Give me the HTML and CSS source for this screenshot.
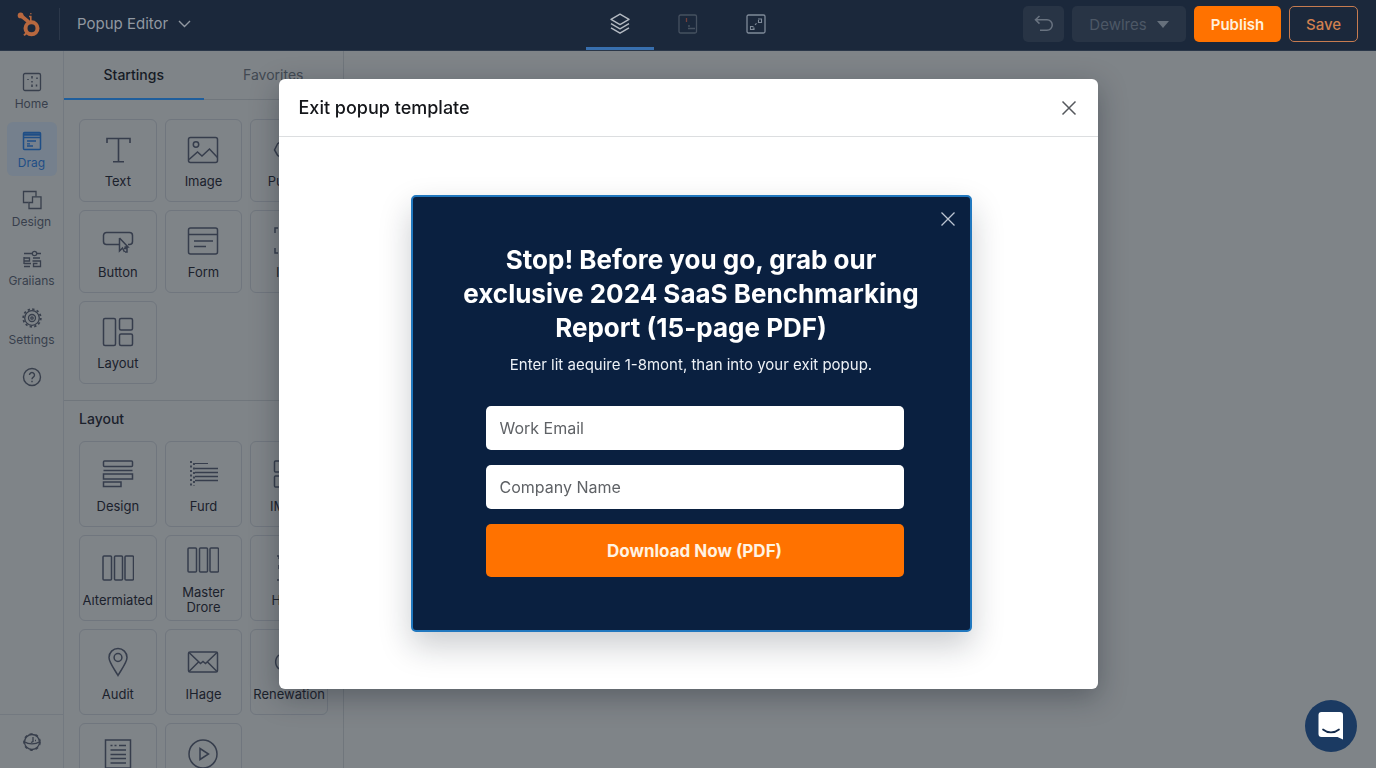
FILE: index.html
```html
<!DOCTYPE html>
<html lang="en">
<head>
<meta charset="utf-8">
<meta name="viewport" content="width=device-width, initial-scale=1">
<title>Popup Editor</title>
<link rel="stylesheet" href="styles.css">
</head>
<body>
<div class="app">
  <header class="topbar">
    <div class="brand">
      <a class="logo" href="#" aria-label="Dashboard">
        <svg width="24" height="26" viewBox="0 0 24 26" fill="none" stroke="currentColor">
          <circle cx="14.5" cy="17.3" r="6" stroke-width="4"/>
          <path d="M3.8 4.5 11 10.3" stroke-width="3.6" stroke-linecap="round"/>
          <circle cx="3.6" cy="4.4" r="2.9" fill="currentColor" stroke="none"/>
          <path d="M13.8 10.5V5M13.8 2.2v1M12 5.5h2.5" stroke-width="1.6"/>
          <path d="M10 21.5 7 24.4" stroke-width="2"/>
        </svg>
      </a>
      <button class="switcher" type="button">Popup Editor
        <svg width="13" height="8" viewBox="0 0 13 8" fill="none" stroke="currentColor" stroke-width="1.4"><path d="M1 1l5.5 5.5L12 1"/></svg>
      </button>
    </div>
    <nav class="views" aria-label="Views">
      <button class="view view-active" type="button" aria-label="Layers">
        <svg width="22" height="22" viewBox="0 0 22 22" fill="none" stroke="currentColor" stroke-width="1.4" stroke-linejoin="round"><path d="M11 1.2 20 6.4 11 11.6 2 6.4z"/><path d="M2 10.6l9 5.2 9-5.2M2 14.8l9 5.4 9-5.4"/></svg>
      </button>
      <button class="view view-muted" type="button" aria-label="Page">
        <svg width="20" height="20" viewBox="0 0 20 20" fill="none" stroke="currentColor" stroke-width="1.3"><rect x="1" y="1" width="17.5" height="18" rx="1.5"/><path class="accent" d="M8.500 4v4"/><path d="M10 12h2M10 14.500h7"/></svg>
      </button>
      <button class="view" type="button" aria-label="Preview">
        <svg width="20" height="20" viewBox="0 0 20 20" fill="none" stroke="currentColor" stroke-width="1.3"><rect x="1" y="1" width="18" height="18" rx="1.500"/><path d="M12 5h3.500v3.500h-3V6M7.500 12.500H4.500v3h3.500v-1.500H6.500M9 10.800l1.500-1.500" stroke-width="1.100"/></svg>
      </button>
    </nav>
    <div class="actions">
      <button class="btn btn-icon" type="button" aria-label="Undo">
        <svg width="20" height="18" viewBox="0 0 20 18" fill="none" stroke="currentColor" stroke-width="1.500"><path d="M5.500 1 1.500 4.800l4 3.800M1.500 4.800H13a5 5 0 0 1 0 10.500H6"/></svg>
      </button>
      <button class="btn btn-menu" type="button">Dewlres
        <svg width="12" height="7" viewBox="0 0 12 7" fill="currentColor"><path d="M0 0h12L6 7z"/></svg>
      </button>
      <button class="btn btn-primary" type="button">Publish</button>
      <button class="btn btn-outline" type="button">Save</button>
    </div>
  </header>

  <div class="workspace">
    <nav class="rail" aria-label="Sections">
      <div class="rail-items">
        <a class="rail-item" href="#"><svg width="20" height="20" viewBox="0 0 20 20" fill="none" stroke="currentColor" stroke-width="1.300"><rect x="1.500" y="1.500" width="17" height="17" rx="1.500"/><path d="M10 4v2.500M15 5.500v1.500M10 9v1.500M10 12.500V15M14.500 12.500v2M6 7v1" stroke-width="1.500"/></svg>Home</a>
        <a class="rail-item rail-active" href="#"><svg width="20" height="20" viewBox="0 0 20 20" fill="none" stroke="currentColor" stroke-width="1.500"><rect x="1.500" y="1.500" width="17" height="17" rx="1"/><path d="M2 3.500h16" stroke-width="2.500"/><path d="M2 6.500h16"/><path d="M5 10h9M5 12.800h3M5 15h6" stroke-width="1.300"/></svg>Drag</a>
        <a class="rail-item" href="#"><svg width="20" height="20" viewBox="0 0 20 20" fill="none" stroke="currentColor" stroke-width="1.300"><path d="M6.500 12.500h-5v-11H14v5"/><path d="M10.500 8.500V6.800H19v11.700H7v-6h3.500v-4"/></svg>Design</a>
        <a class="rail-item" href="#"><svg width="20" height="20" viewBox="0 0 20 20" fill="none" stroke="currentColor" stroke-width="1.300"><path d="M2 4.500h8M15 4.500h4"/><circle cx="12.500" cy="4.500" r="2.200"/><path d="M2 8v7M2 9h5.500v3H2M2 14.500h7M2 17.500h6M11 9h7M10.500 12h8v5.500h-7v-3h4"/></svg>Graiians</a>
        <a class="rail-item" href="#"><svg width="20" height="20" viewBox="0 0 20 20" fill="none" stroke="currentColor" stroke-width="1.300"><circle cx="10" cy="10" r="7.300"/><circle cx="10" cy="10" r="8.800" stroke-width="1.800" stroke-dasharray="2.300 2.300"/><circle cx="10" cy="10" r="3.500"/><circle cx="10" cy="10" r="1.200"/></svg>Settings</a>
        <a class="rail-item" href="#" aria-label="Help"><svg width="20" height="20" viewBox="0 0 20 20" fill="none" stroke="currentColor" stroke-width="1.400"><circle cx="10" cy="10" r="8.500"/><path d="M7.500 8a2.500 2.500 0 1 1 3.800 2.100c-.9.600-1.300 1-1.300 2.100M10 13.700v1.500"/></svg></a>
      </div>
      <a class="rail-foot" href="#" aria-label="Account"><svg width="20" height="20" viewBox="0 0 20 20" fill="none" stroke="currentColor" stroke-width="1.300"><circle cx="10" cy="10" r="7.500"/><circle cx="10" cy="10" r="8.200" stroke-dasharray="3 3"/><path d="M3 10c3 2.500 11 2.500 14 0M11 5v4.500l-2 1M9.500 17v2M13 8.500h1"/></svg></a>
    </nav>

    <aside class="panel">
      <div class="tabs">
        <button class="tab tab-active" type="button">Startings</button>
        <button class="tab" type="button">Favorites</button>
      </div>
      <div class="tiles">
        <button class="tile" type="button"><svg width="32" height="32" viewBox="0 0 32 32" fill="none" stroke="currentColor" stroke-width="1.600"><path d="M5 9V4.500h23V9M16.500 4.500v23M11 27.800h11M5 4v5M28 4v5"/></svg>Text</button>
        <button class="tile" type="button"><svg width="32" height="32" viewBox="0 0 32 32" fill="none" stroke="currentColor" stroke-width="1.500"><rect x="1.500" y="3.500" width="29" height="25" rx="2"/><circle cx="9" cy="10.500" r="2.700"/><path d="M2 25.500l8.500-7.500 4.500 4 7.500-7 8 8.500"/></svg>Image</button>
        <button class="tile" type="button"><svg width="32" height="32" viewBox="0 0 32 32" fill="none" stroke="currentColor" stroke-width="1.500"><path d="M5 9 1.500 16 5 22M5 9h20v13H5"/></svg>Pusher</button>
        <button class="tile" type="button"><svg width="32" height="32" viewBox="0 0 32 32" fill="none" stroke="currentColor" stroke-width="1.500"><path d="M17 19.500H4.500a3 3 0 0 1-3-3v-6a3 3 0 0 1 3-3h23a3 3 0 0 1 3 3v6a3 3 0 0 1-3 3h-1.500"/><path d="M17.500 13v13l3-3 2 4M17.500 13l8.500 9h-3.500M22 23.500h3v3.500h-2"/></svg>Button</button>
        <button class="tile" type="button"><svg width="32" height="32" viewBox="0 0 32 32" fill="none" stroke="currentColor" stroke-width="1.500"><rect x="1.500" y="3" width="29" height="26" rx="2"/><path d="M2 9.500h28M7 16h19M7 21.500h12"/></svg>Form</button>
        <button class="tile" type="button"><svg width="32" height="32" viewBox="0 0 32 32" fill="none" stroke="currentColor" stroke-width="1.500"><path d="M5 3H2v5M2 23v5h3M27 3h3v5M30 23v5h-3"/></svg>Icon</button>
        <button class="tile" type="button"><svg width="32" height="32" viewBox="0 0 32 32" fill="none" stroke="currentColor" stroke-width="1.500"><rect x="1.500" y="2.500" width="12" height="27" rx="1.500"/><rect x="17.500" y="2.500" width="13" height="11.500" rx="1.500"/><rect x="17.500" y="18" width="13" height="11.500" rx="1.500"/></svg>Layout</button>
      </div>
      <h2 class="group-title">Layout</h2>
      <div class="tiles tiles-tall">
        <button class="tile" type="button"><svg width="32" height="32" viewBox="0 0 32 32" fill="none" stroke="currentColor" stroke-width="1.500"><rect x="1.500" y="3" width="29" height="5.500" rx="1"/><path d="M1.500 12.500h29M1.500 16H30.500v5H1.500z"/><path d="M1.500 24h17.500v4.500H1.500z"/></svg>Design</button>
        <button class="tile" type="button"><svg width="32" height="32" viewBox="0 0 32 32" fill="none" stroke="currentColor" stroke-width="1.500"><path d="M8 5.500h13" stroke-width="1"/><path d="M8 10.500h23M8 14.500h23M8 18.500h23M8 22.500h23"/><path d="M4 3v25M7 5v23" stroke-dasharray="2 2.500" stroke-width="1.800"/></svg>Furd</button>
        <button class="tile" type="button"><svg width="32" height="32" viewBox="0 0 32 32" fill="none" stroke="currentColor" stroke-width="1.500"><rect x="1.500" y="3" width="12" height="11" rx="1"/><rect x="1.500" y="18" width="12" height="11" rx="1"/><rect x="18" y="3" width="12" height="26" rx="1"/></svg>IMage</button>
        <button class="tile" type="button"><svg width="32" height="32" viewBox="0 0 32 32" fill="none" stroke="currentColor" stroke-width="1.500"><rect x="1" y="4" width="8.500" height="24" rx="1"/><rect x="12.500" y="4" width="8" height="24" rx="1"/><rect x="23" y="4" width="8.500" height="24" rx="1"/></svg>Aıtermiated</button>
        <button class="tile" type="button"><svg width="32" height="32" viewBox="0 0 32 32" fill="none" stroke="currentColor" stroke-width="1.500"><rect x="1" y="4" width="8.500" height="24" rx="1"/><rect x="12.500" y="4" width="8" height="24" rx="1"/><rect x="23" y="4" width="8.500" height="24" rx="1"/></svg>Master<br>Drore</button>
        <button class="tile" type="button"><svg width="32" height="32" viewBox="0 0 32 32" fill="none" stroke="currentColor" stroke-width="1.500"><path d="M4 4h24M6 4v3M6 13v4M4 28h24"/></svg>Helps</button>
        <button class="tile" type="button"><svg width="32" height="32" viewBox="0 0 32 32" fill="none" stroke="currentColor" stroke-width="1.500"><path d="M16 29.500C13 24 7 16.500 7 11.500a9 9 0 0 1 18 0c0 5-6 12.500-9 18z"/><circle cx="16" cy="11.500" r="3.900"/></svg>Audit</button>
        <button class="tile" type="button"><svg width="32" height="32" viewBox="0 0 32 32" fill="none" stroke="currentColor" stroke-width="1.500"><rect x="1.500" y="6" width="29" height="20" rx="1.500"/><path d="M2 6.500 13.500 17.500l2.500-2 2.500 2L30 6.500M2 25.500l9.500-9.500M30 25.500 20.500 16"/></svg>IHage</button>
        <button class="tile" type="button"><svg width="32" height="32" viewBox="0 0 32 32" fill="none" stroke="currentColor" stroke-width="1.500"><path d="M6 9a9 9 0 0 0 0 14M26 9a9 9 0 0 1 0 14"/></svg>Renewation</button>
        <button class="tile tile-bare" type="button" aria-label="Blog"><svg width="32" height="32" viewBox="0 0 32 32" fill="none" stroke="currentColor" stroke-width="1.500"><rect x="3.500" y="2" width="25" height="28"/><path d="M8.500 7.500h2M12.500 7.500h2M17 7.500h7M8.500 12h15.500M8.500 16.500h15.500M8.500 20.500h15.500M8.500 25h15.500"/></svg></button>
        <button class="tile tile-bare" type="button" aria-label="Video"><svg width="32" height="32" viewBox="0 0 32 32" fill="none" stroke="currentColor" stroke-width="1.500"><circle cx="16" cy="16" r="14"/><path d="M13 10.500v11l8.500-5.500z"/></svg></button>
      </div>
    </aside>
    <main class="canvas"></main>
  </div>
</div>

<div class="overlay">
  <section class="modal" role="dialog" aria-modal="true" aria-labelledby="modal-title">
    <header class="modal-head">
      <h1 class="modal-title" id="modal-title">Exit popup template</h1>
      <button class="close" type="button" aria-label="Close">
        <svg width="16" height="16" viewBox="0 0 16 16" fill="none" stroke="currentColor" stroke-width="1.500"><path d="M1.500 1.500l13 13M14.500 1.500l-13 13"/></svg>
      </button>
    </header>
    <div class="modal-body">
      <form class="popup">
        <button class="popup-close" type="button" aria-label="Dismiss popup">
          <svg width="16" height="16" viewBox="0 0 16 16" fill="none" stroke="currentColor" stroke-width="1.300"><path d="M1.500 1.500l13 13M14.500 1.500l-13 13"/></svg>
        </button>
        <h2 class="popup-title">Stop! Before you go, grab our exclusive 2024 SaaS Benchmarking Report (15-page PDF)</h2>
        <p class="popup-text">Enter lit aequire 1-8mont, than into your exit popup.</p>
        <div class="fields">
          <input class="field" type="email" placeholder="Work Email" aria-label="Work Email">
          <input class="field" type="text" placeholder="Company Name" aria-label="Company Name">
          <button class="download" type="submit">Download Now (PDF)</button>
        </div>
      </form>
    </div>
  </section>
</div>

<button class="chat" type="button" aria-label="Open chat">
  <svg width="28" height="30" viewBox="0 0 28 30"><path d="M4.500 1h18.500a3 3 0 0 1 3 3v24.500L20.500 26H4.500a3 3 0 0 1-3-3V4a3 3 0 0 1 3-3z" fill="#fff"/><path d="M6 18.500c4.500 3.800 11.500 3.800 16 0" fill="none" stroke="#12294a" stroke-width="1.700" stroke-linecap="round"/></svg>
</button>
</body>
</html>
```
FILE: styles.css
```css
* { box-sizing: border-box; }

body {
  margin: 0;
  font-family: Inter, "Liberation Sans", sans-serif;
  font-size: 13px;
  color: #1b212c;
  background: #7f8488;
}

button, input { font: inherit; color: inherit; }
button { padding: 0; border: 0; background: none; cursor: pointer; }
a { color: inherit; text-decoration: none; }
svg { display: block; flex: none; }
h1, h2, p { margin: 0; }

.app {
  display: flex;
  flex-direction: column;
  height: 100vh;
  overflow: hidden;
}

/* Top bar */
.topbar {
  display: grid;
  grid-template-columns: 1fr auto 1fr;
  flex: none;
  height: 51px;
  background: #1b283b;
  border-bottom: 1px solid #2a3749;
}
.brand { display: flex; align-items: center; padding-bottom: 3px; }
.logo {
  display: flex;
  align-items: center;
  justify-content: flex-end;
  width: 60px;
  height: 32px;
  padding-right: 18px;
  color: #b8683f;
  border-right: 1px solid #2c384a;
}
.switcher {
  display: flex;
  align-items: center;
  gap: 10px;
  padding-left: 17px;
  font-size: 15px;
  color: #9198a1;
}
.views { display: flex; }
.view {
  display: grid;
  place-items: center;
  width: 68px;
  color: #7f8a99;
  border-bottom: 3px solid transparent;
}
.view-active { color: #b4bac2; border-color: #386fae; }
.view-muted { color: #465160; }
.accent { stroke: #73403c; }
.actions {
  display: flex;
  align-items: flex-start;
  justify-content: flex-end;
  gap: 8px;
  padding: 6px 18px 0 0;
}
.btn {
  display: flex;
  align-items: center;
  justify-content: center;
  height: 36px;
  border-radius: 5px;
  font-size: 15px;
}
.btn-icon { width: 41px; background: #283445; color: #697380; }
.btn-menu { gap: 10px; width: 114px; background: #283445; color: #4d5866; }
.btn-menu svg { color: #66707c; }
.btn-primary { width: 87px; background: #ff7200; color: #fff0dc; font-weight: 600; }
.btn-outline { width: 69px; border: 1px solid #c67b50; color: #d0804f; font-weight: 500; }

/* Workspace */
.workspace { display: flex; flex: 1; min-height: 0; }
.rail {
  display: flex;
  flex-direction: column;
  justify-content: space-between;
  flex: none;
  width: 64px;
  border-right: 1px solid #737980;
  color: #383f4c;
}
.rail-items {
  display: flex;
  flex-direction: column;
  align-items: center;
  gap: 5px;
  padding-top: 12px;
}
.rail-item {
  display: flex;
  flex-direction: column;
  align-items: center;
  gap: 4px;
  width: 50px;
  height: 54px;
  padding-top: 9px;
  border-radius: 6px;
  line-height: 16px;
  font-size: 12px;
}
.rail-active { background: #75808d; color: #1f4e86; }
.rail-foot {
  display: grid;
  place-items: center;
  height: 54px;
  border-top: 1px solid #737980;
}

.panel {
  flex: none;
  width: 280px;
  overflow: hidden;
  border-right: 1px solid #70767c;
}
.tabs {
  display: grid;
  grid-template-columns: 1fr 1fr;
  height: 49px;
  border-bottom: 1px solid #70767c;
}
.tab { height: 49px; border-bottom: 2px solid transparent; font-size: 14px; color: #424952; }
.tab-active { border-color: #1f5e9c; font-weight: 500; color: #161b25; }
.tiles {
  display: grid;
  grid-template-columns: repeat(3, 1fr);
  grid-auto-rows: 83px;
  gap: 8px;
  padding: 19px 15px 16px;
}
.tile {
  display: flex;
  flex-direction: column;
  align-items: center;
  justify-content: center;
  gap: 8px;
  padding-top: 1px;
  border: 1px solid #70767e;
  border-radius: 6px;
  font-size: 13px;
  line-height: 15px;
}
.tile svg { color: #363d4c; }
.group-title {
  padding: 9px 15px 0;
  border-top: 1px solid #70767c;
  font-size: 14px;
  line-height: 18px;
  font-weight: 500;
}
.tiles-tall { grid-auto-rows: 86px; padding-top: 13px; }
.tiles-tall .tile { gap: 9px; padding-top: 3px; }
.tiles-tall .tile-bare { justify-content: flex-start; padding-top: 14px; }
.canvas { flex: 1; }

/* Modal */
.overlay {
  position: fixed;
  inset: 0;
  display: grid;
  place-items: center;
  pointer-events: none;
}
.modal {
  width: 90%;
  max-width: 819px;
  overflow: hidden;
  border-radius: 6px;
  background: #fff;
  box-shadow: 0 8px 28px rgba(20, 26, 36, .35);
  pointer-events: auto;
}
.modal-head {
  display: flex;
  align-items: center;
  justify-content: space-between;
  height: 58px;
  padding: 0 21px 0 20px;
  border-bottom: 1px solid #dcdee0;
}
.modal-title { font-size: 18px; font-weight: 500; color: #14161a; }
.close { color: #55585d; }
.modal-body { padding: 58px 126px 57px 132px; }

.popup {
  position: relative;
  padding: 46px 41px 53px;
  border: 2px solid #2178bf;
  border-radius: 5px;
  background: #0a2040;
  box-shadow: 0 14px 32px rgba(20, 28, 40, .22);
  text-align: center;
  color: #fff;
}
.popup-close { position: absolute; top: 14px; right: 14px; color: #bcc5d2; }
.popup-title { font-size: 26px; line-height: 34px; font-weight: 700; }
.popup-text { padding-top: 8px; font-size: 15px; line-height: 24px; color: #edf1f6; }
.fields {
  display: flex;
  flex-direction: column;
  gap: 15px;
  padding: 29px 25px 0 32px;
}
.field {
  width: 100%;
  height: 44px;
  padding: 0 14px;
  border: 0;
  border-radius: 5px;
  background: #fff;
  font-size: 16px;
}
.field::placeholder { color: #5f6266; opacity: 1; }
.download {
  height: 53px;
  border-radius: 5px;
  background: #ff7200;
  color: #fff3e2;
  font-size: 17px;
  font-weight: 700;
}

/* Chat launcher */
.chat {
  position: fixed;
  right: 19px;
  bottom: 16px;
  display: grid;
  place-items: center;
  width: 52px;
  height: 52px;
  border-radius: 50%;
  background: #1b3a62;
}
```
